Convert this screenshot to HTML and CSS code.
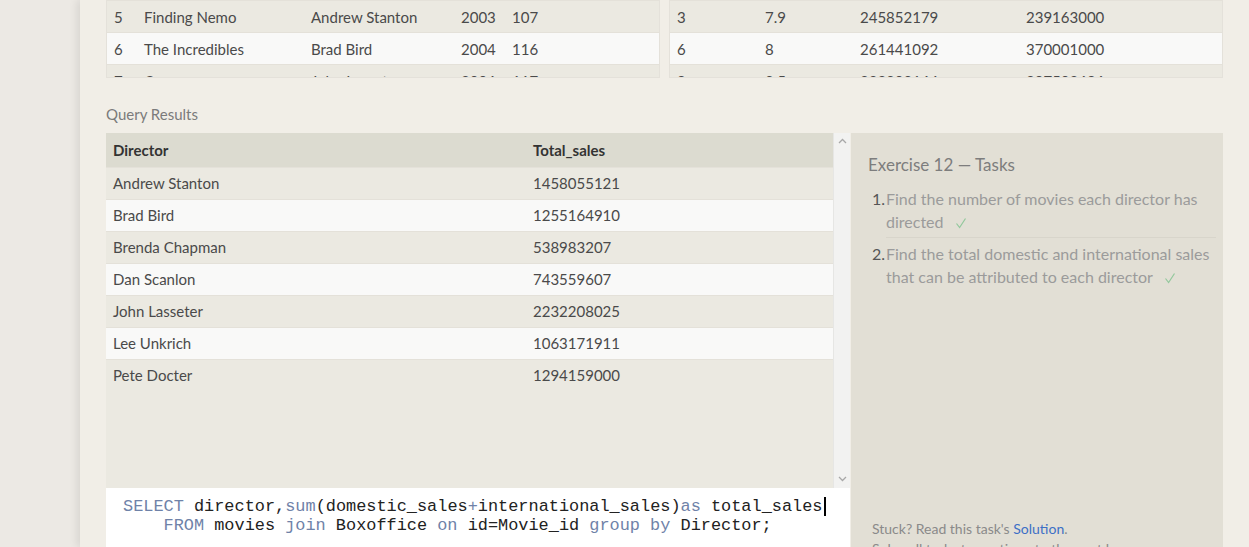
FILE: index.html
```html
<!DOCTYPE html>
<html>
<head>
<meta charset="utf-8">
<link rel="stylesheet" href="styles.css">
</head>
<body>
<div class="page">
  <div class="gutter"></div>
  <main class="main">
    <div class="peek">
      <div class="peek-box">
        <table class="data movies">
          <colgroup><col class="c1"><col class="c2"><col class="c3"><col class="c4"><col></colgroup>
          <tr class="odd"><td>5</td><td>Finding Nemo</td><td>Andrew Stanton</td><td>2003</td><td>107</td></tr>
          <tr class="even"><td>6</td><td>The Incredibles</td><td>Brad Bird</td><td>2004</td><td>116</td></tr>
          <tr class="odd"><td>7</td><td>Cars</td><td>John Lasseter</td><td>2006</td><td>117</td></tr>
        </table>
      </div>
      <div class="peek-box">
        <table class="data box">
          <colgroup><col class="d1"><col class="d2"><col class="d3"><col></colgroup>
          <tr class="odd"><td>3</td><td>7.9</td><td>245852179</td><td>239163000</td></tr>
          <tr class="even"><td>6</td><td>8</td><td>261441092</td><td>370001000</td></tr>
          <tr class="odd"><td>9</td><td>8.5</td><td>223808164</td><td>297503696</td></tr>
        </table>
      </div>
    </div>

    <div class="label">Query Results</div>

    <div class="workspace">
      <div class="left">
        <div class="results">
          <div class="results-body">
            <table class="data result">
              <colgroup><col class="r1"><col></colgroup>
              <tr class="head"><th>Director</th><th>Total_sales</th></tr>
              <tr class="odd"><td>Andrew Stanton</td><td>1458055121</td></tr>
              <tr class="even"><td>Brad Bird</td><td>1255164910</td></tr>
              <tr class="odd"><td>Brenda Chapman</td><td>538983207</td></tr>
              <tr class="even"><td>Dan Scanlon</td><td>743559607</td></tr>
              <tr class="odd"><td>John Lasseter</td><td>2232208025</td></tr>
              <tr class="even"><td>Lee Unkrich</td><td>1063171911</td></tr>
              <tr class="odd"><td>Pete Docter</td><td>1294159000</td></tr>
            </table>
          </div>
          <div class="scrollbar">
            <svg class="arrow" width="9" height="6" viewBox="0 0 9 6"><path d="M1 5 L4.5 1.5 L8 5" fill="none" stroke="#a8a8a8" stroke-width="1.3"/></svg>
            <svg class="arrow" width="9" height="6" viewBox="0 0 9 6"><path d="M1 1 L4.5 4.5 L8 1" fill="none" stroke="#a8a8a8" stroke-width="1.3"/></svg>
          </div>
        </div>
        <div class="editor"><pre class="code"><span class="kw">SELECT</span> director,<span class="kw">sum</span>(domestic_sales<span class="kw">+</span>international_sales)<span class="kw">as</span> total_sales<span class="caret"></span>
    <span class="kw">FROM</span> movies <span class="kw">join</span> Boxoffice <span class="kw">on</span> id=Movie_id <span class="kw">group by</span> Director;</pre></div>
      </div>

      <aside class="tasks">
        <div class="tasks-top">
          <h2 class="tasks-title">Exercise 12 — Tasks</h2>
          <ol class="task-list">
            <li class="task"><span class="num">1.</span><span class="txt">Find the number of movies each director has directed<svg class="check" width="12" height="12" viewBox="0 0 12 12"><path d="M1.5 6.5 L4.6 10.5 L10.5 1.5" fill="none" stroke="#92c89c" stroke-width="1.2"/></svg></span></li>
            <li class="task"><span class="num">2.</span><span class="txt">Find the total domestic and international sales that can be attributed to each director<svg class="check" width="12" height="12" viewBox="0 0 12 12"><path d="M1.5 6.5 L4.6 10.5 L10.5 1.5" fill="none" stroke="#92c89c" stroke-width="1.2"/></svg></span></li>
          </ol>
        </div>
        <div class="tasks-foot">
          <div>Stuck? Read this task's <a class="link">Solution</a>.</div>
          <div>Solve all tasks to continue to the next lesson.</div>
        </div>
      </aside>
    </div>
  </main>
</div>
</body>
</html>
```

FILE: styles.css
```css
* { box-sizing: border-box; }
html, body { margin: 0; padding: 0; }
body {
  background: #ebe8e3;
  font-family: "Lato", "Open Sans", sans-serif;
  color: #444;
  overflow: hidden;
  height: 547px;
}
.page { display: flex; height: 547px; }
.gutter { width: 80px; flex: none; background: #ece9e4; }
.main {
  flex: 1;
  background: #f1eee7;
  padding: 0 26px;
  box-shadow: -3px 0 8px rgba(0,0,0,0.09);
}

/* top peek tables */
.peek { display: grid; grid-template-columns: 554px 554px; gap: 9px; height: 78px; overflow: hidden; }
.peek-box { border: 1px solid #e4e1da; border-top: none; overflow: hidden; height: 78px; }
.data { border-collapse: collapse; width: 100%; table-layout: fixed; font-size: 15px; color: #4a4a4a; }
.data td, .data th { padding: 0 0 0 7px; text-align: left; height: 32px; white-space: nowrap; border-top: 1px solid #e4e1d9; }
.data tr.odd td { background: #ebe9e1; }
.data tr.even td { background: #f9f9f8; }
.movies .c1 { width: 30px; } .movies .c2 { width: 167px; } .movies .c3 { width: 150px; } .movies .c4 { width: 51px; }
.box .d1 { width: 88px; } .box .d2 { width: 95px; } .box .d3 { width: 166px; }

.label { font-size: 15px; color: #7b7b7b; margin-top: 26px; height: 29px; line-height: 20px; }

.workspace { display: grid; grid-template-columns: 744px 372px; gap: 1px; }
.left { display: flex; flex-direction: column; }
.results { display: flex; height: 355px; background: #ebe9e1; }
.results-body { flex: 1; overflow: hidden; }
.result .r1 { width: 420px; }
.result tr.head th { background: #dcdbd0; height: 34px; font-weight: 700; color: #333; border-top: none; padding-top: 1px; }
.scrollbar {
  width: 17px; flex: none; background: #f2f2f1; border-left: 1px solid #e6e6e4;
  display: flex; flex-direction: column; justify-content: space-between; align-items: center;
  padding: 5px 0 6px;
}
.editor { background: #fff; height: 80px; padding: 9px 0 0 17px; }
.code {
  margin: 0; font-family: "Liberation Mono", "Courier New", monospace;
  font-size: 16.9px; line-height: 19px; color: #222;
}
.kw { color: #6f82a8; }
.caret { display: inline-block; width: 2px; height: 19px; background: #000; vertical-align: top; margin-left: 2px; }

.tasks {
  background: #e2dfd5; height: 440px; padding: 19px 7px 0 17px;
  display: flex; flex-direction: column; justify-content: space-between;
}
.tasks-title { margin: 0; font-size: 17px; font-weight: 400; color: #7d7d7d; line-height: 26px; }
.task-list { list-style: none; margin: 10px 0 0 0; padding: 0; }
.task { display: flex; font-size: 16px; line-height: 22.5px; color: #9b9b9b; }
.task:first-child { padding-bottom: 4px; }
.task + .task { border-top: 1px solid #d8d5cb; margin-left: 18px; padding-top: 5px; }
.num { width: 14px; margin-left: 4px; color: #555; flex: none; }
.task + .task .num { margin-left: -14px; }
.txt { flex: 1; padding-right: 4px; }
.check { margin-left: 11px; vertical-align: -1px; }
.tasks-foot { font-size: 14px; color: #8a8a8a; line-height: 20px; padding: 0 0 14px 4px; }
.link { color: #3d6fc6; }
```
